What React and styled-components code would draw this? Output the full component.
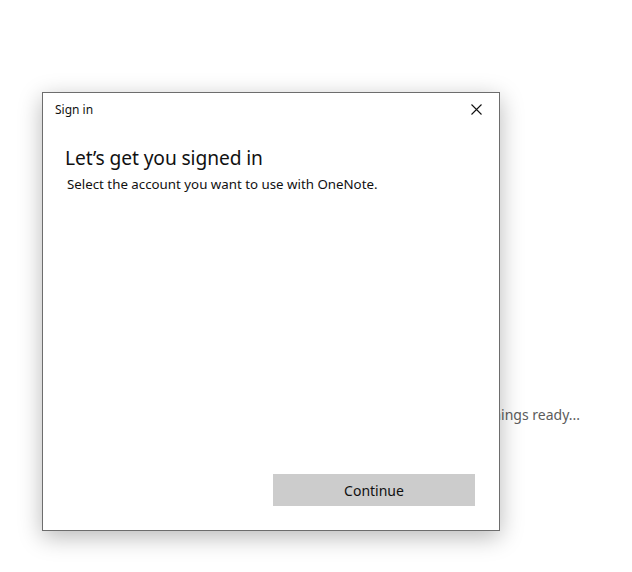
import React from 'react'
import styled, { createGlobalStyle } from 'styled-components'

const Global = createGlobalStyle`
  html, body {
    margin: 0;
    padding: 0;
    background: #ffffff;
  }
  body {
    font-family: "Noto Sans", "Open Sans", sans-serif;
  }
`

const Screen = styled.div`
  position: relative;
  width: 632px;
  height: 572px;
  background: #ffffff;
  overflow: hidden;
`

const Loading = styled.div`
  display: flex;
  justify-content: flex-end;
  padding: 405px 52px 0 0;
  font-size: 14px;
  color: #5c5c5c;
`

const Dialog = styled.div`
  position: absolute;
  left: 42px;
  top: 92px;
  width: 456px;
  height: 437px;
  background: #ffffff;
  border: 1px solid #6d6d6d;
  box-shadow: 0 6px 22px rgba(0, 0, 0, 0.28);
  display: flex;
  flex-direction: column;
`

const TitleBar = styled.div`
  display: flex;
  align-items: center;
  justify-content: space-between;
  height: 32px;
  padding: 0 13px 0 12px;
`

const Title = styled.span`
  font-size: 12px;
  color: #111;
`

const Close = styled.button`
  display: flex;
  align-items: center;
  justify-content: center;
  width: 20px;
  height: 20px;
  padding: 0;
  border: none;
  background: none;
`

const Body = styled.div`
  flex: 1;
  display: flex;
  flex-direction: column;
  padding: 19px 24px 24px 22px;
`

const Heading = styled.h1`
  margin: 0;
  font-size: 19.2px;
  font-weight: 400;
  color: #111;
  letter-spacing: -0.1px;
`

const Subtitle = styled.p`
  margin: 4px 0 0 2px;
  font-size: 13.3px;
  color: #111;
`

const Footer = styled.div`
  margin-top: auto;
  display: flex;
  justify-content: flex-end;
`

const Button = styled.button`
  width: 202px;
  height: 32px;
  border: none;
  background: #cccccc;
  font-family: inherit;
  font-size: 14px;
  color: #111;
`

export default function App() {
  return (
    <>
      <Global />
      <Screen>
        <Loading>Getting things ready...</Loading>
        <Dialog>
          <TitleBar>
            <Title>Sign in</Title>
            <Close aria-label="Close">
              <svg width="11" height="11" viewBox="0 0 11 11">
                <path d="M0.5 0.5 L10.5 10.5 M10.5 0.5 L0.5 10.5" stroke="#111" strokeWidth="1.1" />
              </svg>
            </Close>
          </TitleBar>
          <Body>
            <Heading>Let’s get you signed in</Heading>
            <Subtitle>Select the account you want to use with OneNote.</Subtitle>
            <Footer>
              <Button>Continue</Button>
            </Footer>
          </Body>
        </Dialog>
      </Screen>
    </>
  )
}
